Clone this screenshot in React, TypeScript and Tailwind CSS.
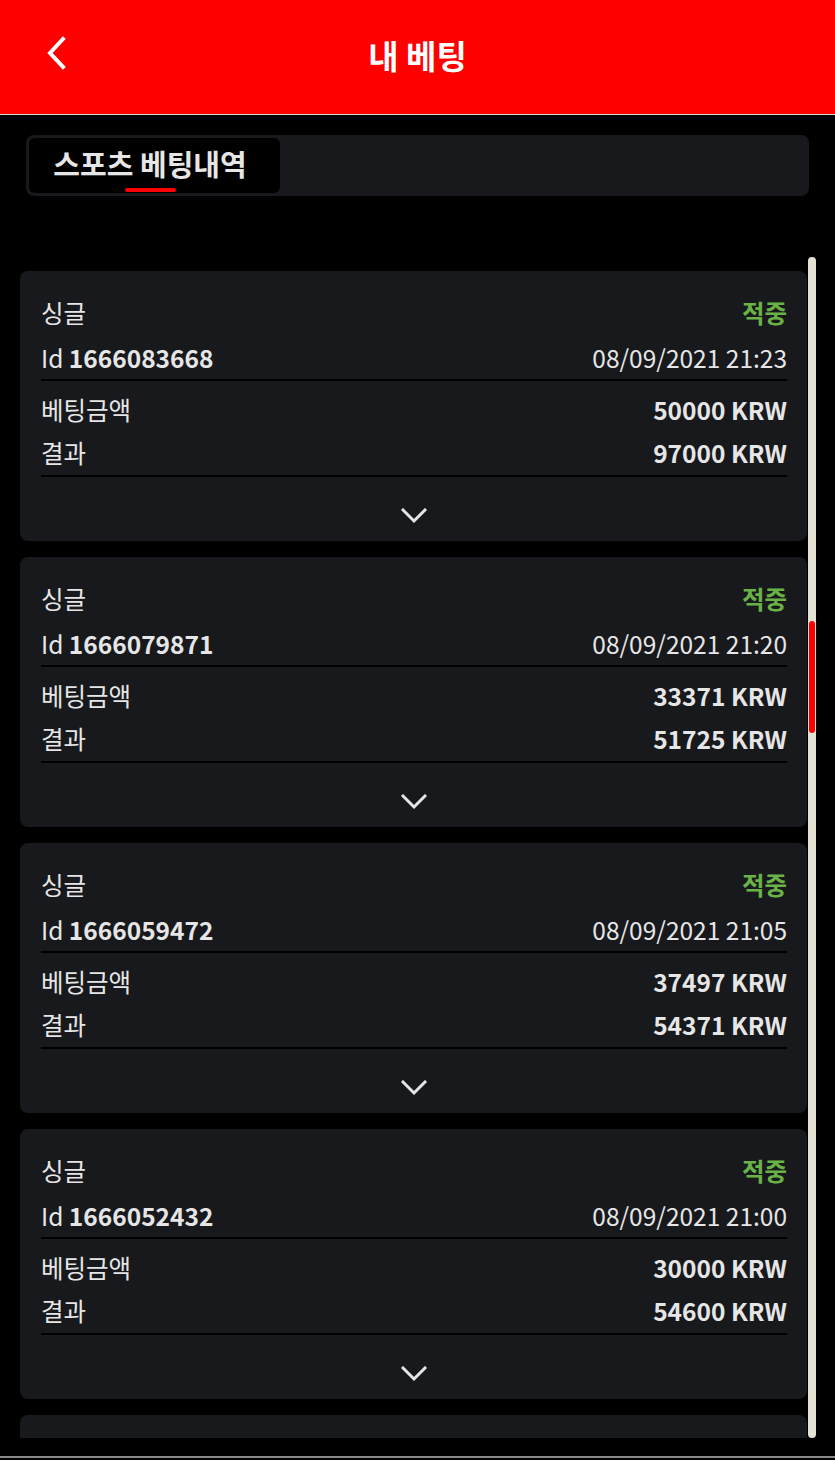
import React from "react";

const bets = [
  { id: "1666083668", date: "08/09/2021 21:23", amount: "50000 KRW", result: "97000 KRW" },
  { id: "1666079871", date: "08/09/2021 21:20", amount: "33371 KRW", result: "51725 KRW" },
  { id: "1666059472", date: "08/09/2021 21:05", amount: "37497 KRW", result: "54371 KRW" },
  { id: "1666052432", date: "08/09/2021 21:00", amount: "30000 KRW", result: "54600 KRW" },
];

function Card({ b }: { b: (typeof bets)[number] }) {
  return (
    <div className="h-[270px] shrink-0 rounded-lg bg-[#18191d] pl-[21px] pr-[20px] pt-[26px] text-[24.5px] text-[#e6e6e6]">
      <div className="flex h-[32px] items-center justify-between leading-none">
        <span>싱글</span>
        <span className="font-bold text-[#6ab146]">적중</span>
      </div>
      <div className="mt-[13px] flex h-[32px] items-center justify-between leading-none">
        <span>
          Id <span className="font-bold">{b.id}</span>
        </span>
        <span>{b.date}</span>
      </div>
      <div className="mt-[5px] h-[2px] bg-black" />
      <div className="mt-[13px] flex h-[32px] items-center justify-between leading-none">
        <span>베팅금액</span>
        <span className="font-bold">{b.amount}</span>
      </div>
      <div className="mt-[11px] flex h-[32px] items-center justify-between leading-none">
        <span>결과</span>
        <span className="font-bold">{b.result}</span>
      </div>
      <div className="mt-[6px] h-[2px] bg-black" />
      <div className="mt-[31px] flex justify-center">
        <svg width="26" height="16" viewBox="0 0 26 16" fill="none">
          <path d="M2 2 L13 13 L24 2" stroke="#e6e6e6" strokeWidth="3" strokeLinecap="square" />
        </svg>
      </div>
    </div>
  );
}

export default function App() {
  return (
    <div
      className="relative h-[1460px] w-[835px] overflow-hidden bg-black"
      style={{ fontFamily: '"Noto Sans CJK KR", "Noto Sans", sans-serif' }}
    >
      <header className="relative flex h-[115px] items-center justify-center border-b border-[#d9d9d9] bg-[#ff0000] pb-[4px]">
        <button className="absolute left-[44px] top-[36px]">
          <svg width="24" height="34" viewBox="0 0 24 34" fill="none">
            <path d="M19 3 L6 17 L19 31" stroke="white" strokeWidth="4" strokeLinecap="square" />
          </svg>
        </button>
        <h1 className="text-[33px] font-bold leading-none text-white">내 베팅</h1>
      </header>

      <div className="mx-[26px] mt-[20px] flex h-[61px] rounded-lg bg-[#18191d] p-[3px]">
        <div className="relative flex w-[251px] items-center justify-center rounded-md bg-black pb-[4px] pr-[9px]">
          <span className="text-[29px] font-bold leading-none text-[#e6e6e6]">스포츠 베팅내역</span>
          <span className="absolute bottom-[1px] left-[96px] h-[4px] w-[51px] rounded-sm bg-[#ff0000]" />
        </div>
      </div>

      <div className="relative mt-[61px] h-[1181px] overflow-hidden">
        <div className="flex flex-col gap-[16px] pl-[20px] pr-[28px] pt-[14px]">
          {bets.map((b) => (
            <Card key={b.id} b={b} />
          ))}
          <div className="h-[270px] shrink-0 rounded-lg bg-[#18191d]" />
        </div>
        <div className="absolute left-[808px] top-0 h-full w-[8px] rounded-full bg-[#e4e3d3]">
          <div className="absolute left-[1px] top-[364px] h-[112px] w-[6px] rounded-full bg-[#ff0000]" />
        </div>
      </div>

      <div className="absolute bottom-[2px] left-0 h-[2px] w-full bg-[#8a8a8a]" />
    </div>
  );
}
